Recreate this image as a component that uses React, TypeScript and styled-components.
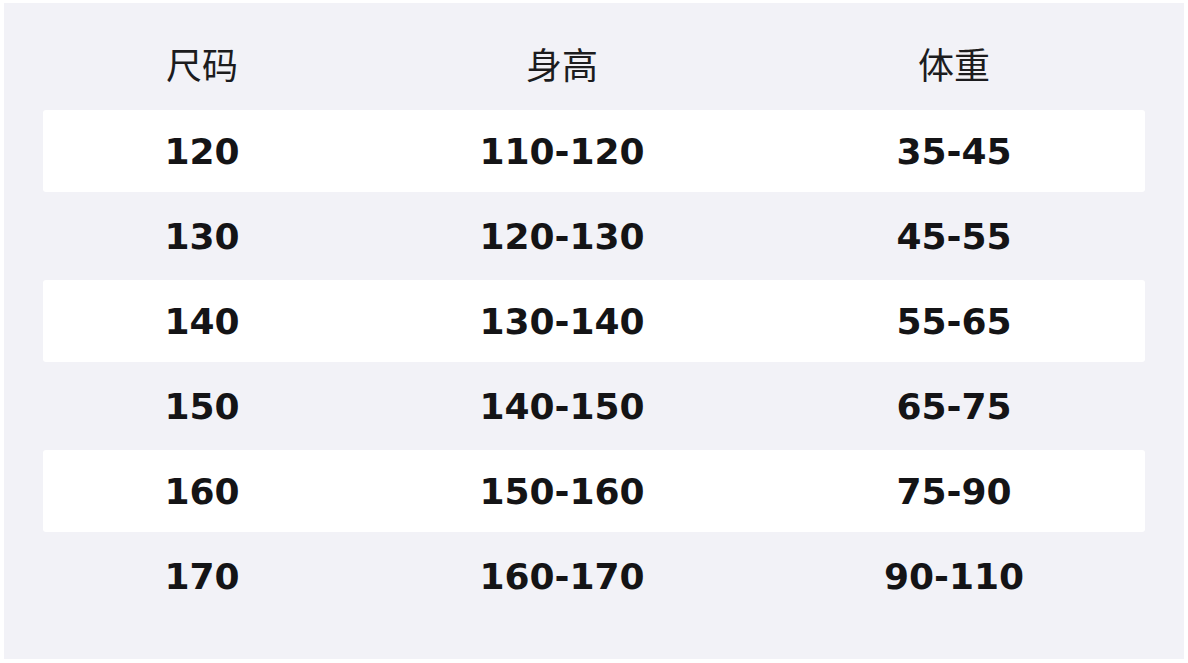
import React from "react";
import styled, { createGlobalStyle } from "styled-components";

const GlobalStyle = createGlobalStyle`
  html, body {
    margin: 0;
    padding: 0;
    background: #ffffff;
  }
  body {
    font-family: "DejaVu Sans", "Noto Sans CJK SC", sans-serif;
  }
`;

const Page = styled.div`
  width: 1188px;
  height: 663px;
  box-sizing: border-box;
  padding: 3px 4px 4px 4px;
`;

const Panel = styled.div`
  height: 100%;
  box-sizing: border-box;
  background: #f2f2f7;
  padding: 22px 39px 0 39px;
  display: flex;
  flex-direction: column;
  gap: 3px;
`;

const Row = styled.div<{ $striped?: boolean }>`
  display: grid;
  grid-template-columns: 318px 402px 382px;
  height: 82px;
  align-items: center;
  background: ${(p) => (p.$striped ? "#ffffff" : "transparent")};
  border-radius: 3px;
`;

const HeadRow = styled(Row)`
  box-sizing: border-box;
  padding-bottom: 6px;
`;

const HeadCell = styled.div`
  text-align: center;
  font-size: 36px;
  font-weight: 400;
  color: #1c1c1e;
`;

const Cell = styled.div`
  text-align: center;
  font-size: 36px;
  font-weight: 700;
  color: #141416;
`;

const rows = [
  ["120", "110-120", "35-45"],
  ["130", "120-130", "45-55"],
  ["140", "130-140", "55-65"],
  ["150", "140-150", "65-75"],
  ["160", "150-160", "75-90"],
  ["170", "160-170", "90-110"],
];

export default function App() {
  return (
    <>
      <GlobalStyle />
      <Page>
        <Panel>
          <HeadRow>
            <HeadCell>尺码</HeadCell>
            <HeadCell>身高</HeadCell>
            <HeadCell>体重</HeadCell>
          </HeadRow>
          {rows.map((r, i) => (
            <Row key={r[0]} $striped={i % 2 === 0}>
              {r.map((c) => (
                <Cell key={c}>{c}</Cell>
              ))}
            </Row>
          ))}
        </Panel>
      </Page>
    </>
  );
}
